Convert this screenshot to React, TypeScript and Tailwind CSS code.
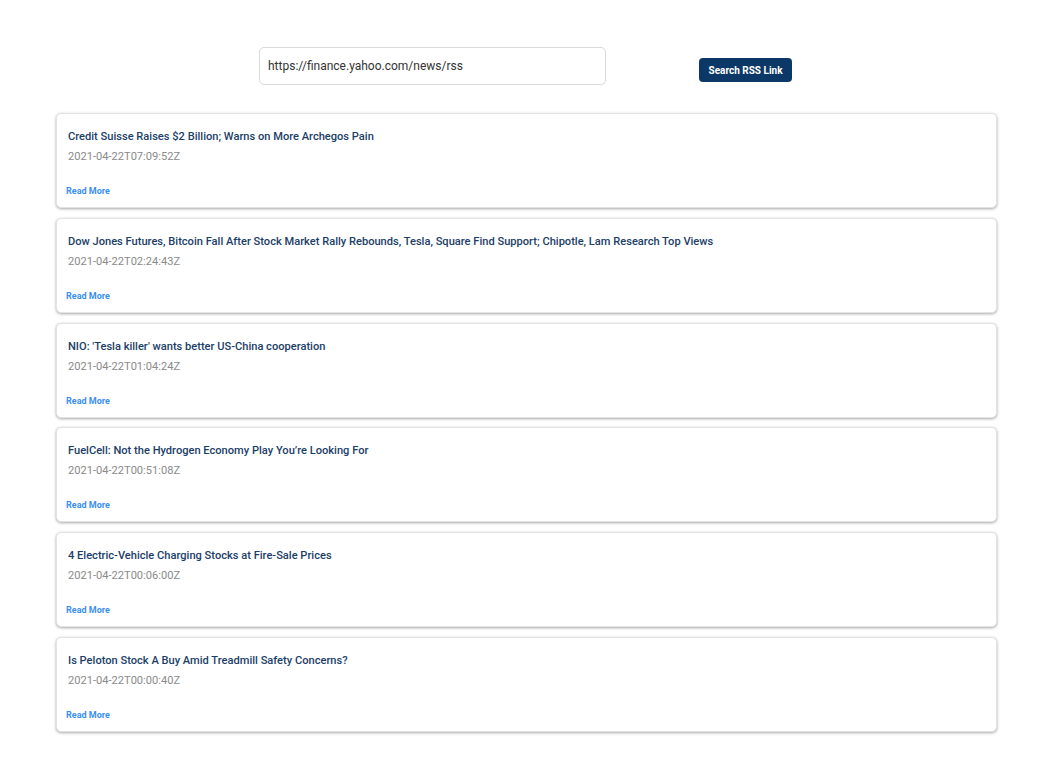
import { useState } from "react";

const items = [
  { title: "Credit Suisse Raises $2 Billion; Warns on More Archegos Pain", date: "2021-04-22T07:09:52Z" },
  {
    title:
      "Dow Jones Futures, Bitcoin Fall After Stock Market Rally Rebounds, Tesla, Square Find Support; Chipotle, Lam Research Top Views",
    date: "2021-04-22T02:24:43Z",
  },
  { title: "NIO: 'Tesla killer' wants better US-China cooperation", date: "2021-04-22T01:04:24Z" },
  { title: "FuelCell: Not the Hydrogen Economy Play You’re Looking For", date: "2021-04-22T00:51:08Z" },
  { title: "4 Electric-Vehicle Charging Stocks at Fire-Sale Prices", date: "2021-04-22T00:06:00Z" },
  { title: "Is Peloton Stock A Buy Amid Treadmill Safety Concerns?", date: "2021-04-22T00:00:40Z" },
];

export default function App() {
  const [url, setUrl] = useState("https://finance.yahoo.com/news/rss");

  return (
    <main className="min-h-screen bg-white pt-[47px] font-['Roboto',sans-serif]">
      <div className="flex items-center pl-[259px]">
        <input
          value={url}
          onChange={(e) => setUrl(e.target.value)}
          className="w-[347px] h-[38px] px-[8px] rounded-[5px] border border-[#d9d9d9] text-[12px] text-[#333] outline-none"
        />
        <button className="ml-[93px] mt-[8px] w-[93px] h-[24px] rounded-[4px] bg-[#0b3866] text-white text-[10px] font-bold">
          Search RSS Link
        </button>
      </div>

      <div className="ml-[56px] mt-[28px] w-[941px] flex flex-col gap-[9.8px]">
        {items.map((item) => (
          <div
            key={item.date}
            className="h-[95px] rounded-[5px] border border-[#e3e3e3] bg-white shadow-[0_1px_3px_rgba(0,0,0,0.35)] pl-[11px] pt-[15px] flex flex-col"
          >
            <h3 className="text-[11.1px] leading-[16px] font-medium text-[#1b4068]">{item.title}</h3>
            <p className="mt-[4px] text-[11.1px] leading-[16px] text-[#8a8a8a]">{item.date}</p>
            <a href="#" className="mt-[20px] ml-[-2px] text-[9px] leading-[12px] font-bold text-[#3b8ff0]">
              Read More
            </a>
          </div>
        ))}
      </div>
    </main>
  );
}
